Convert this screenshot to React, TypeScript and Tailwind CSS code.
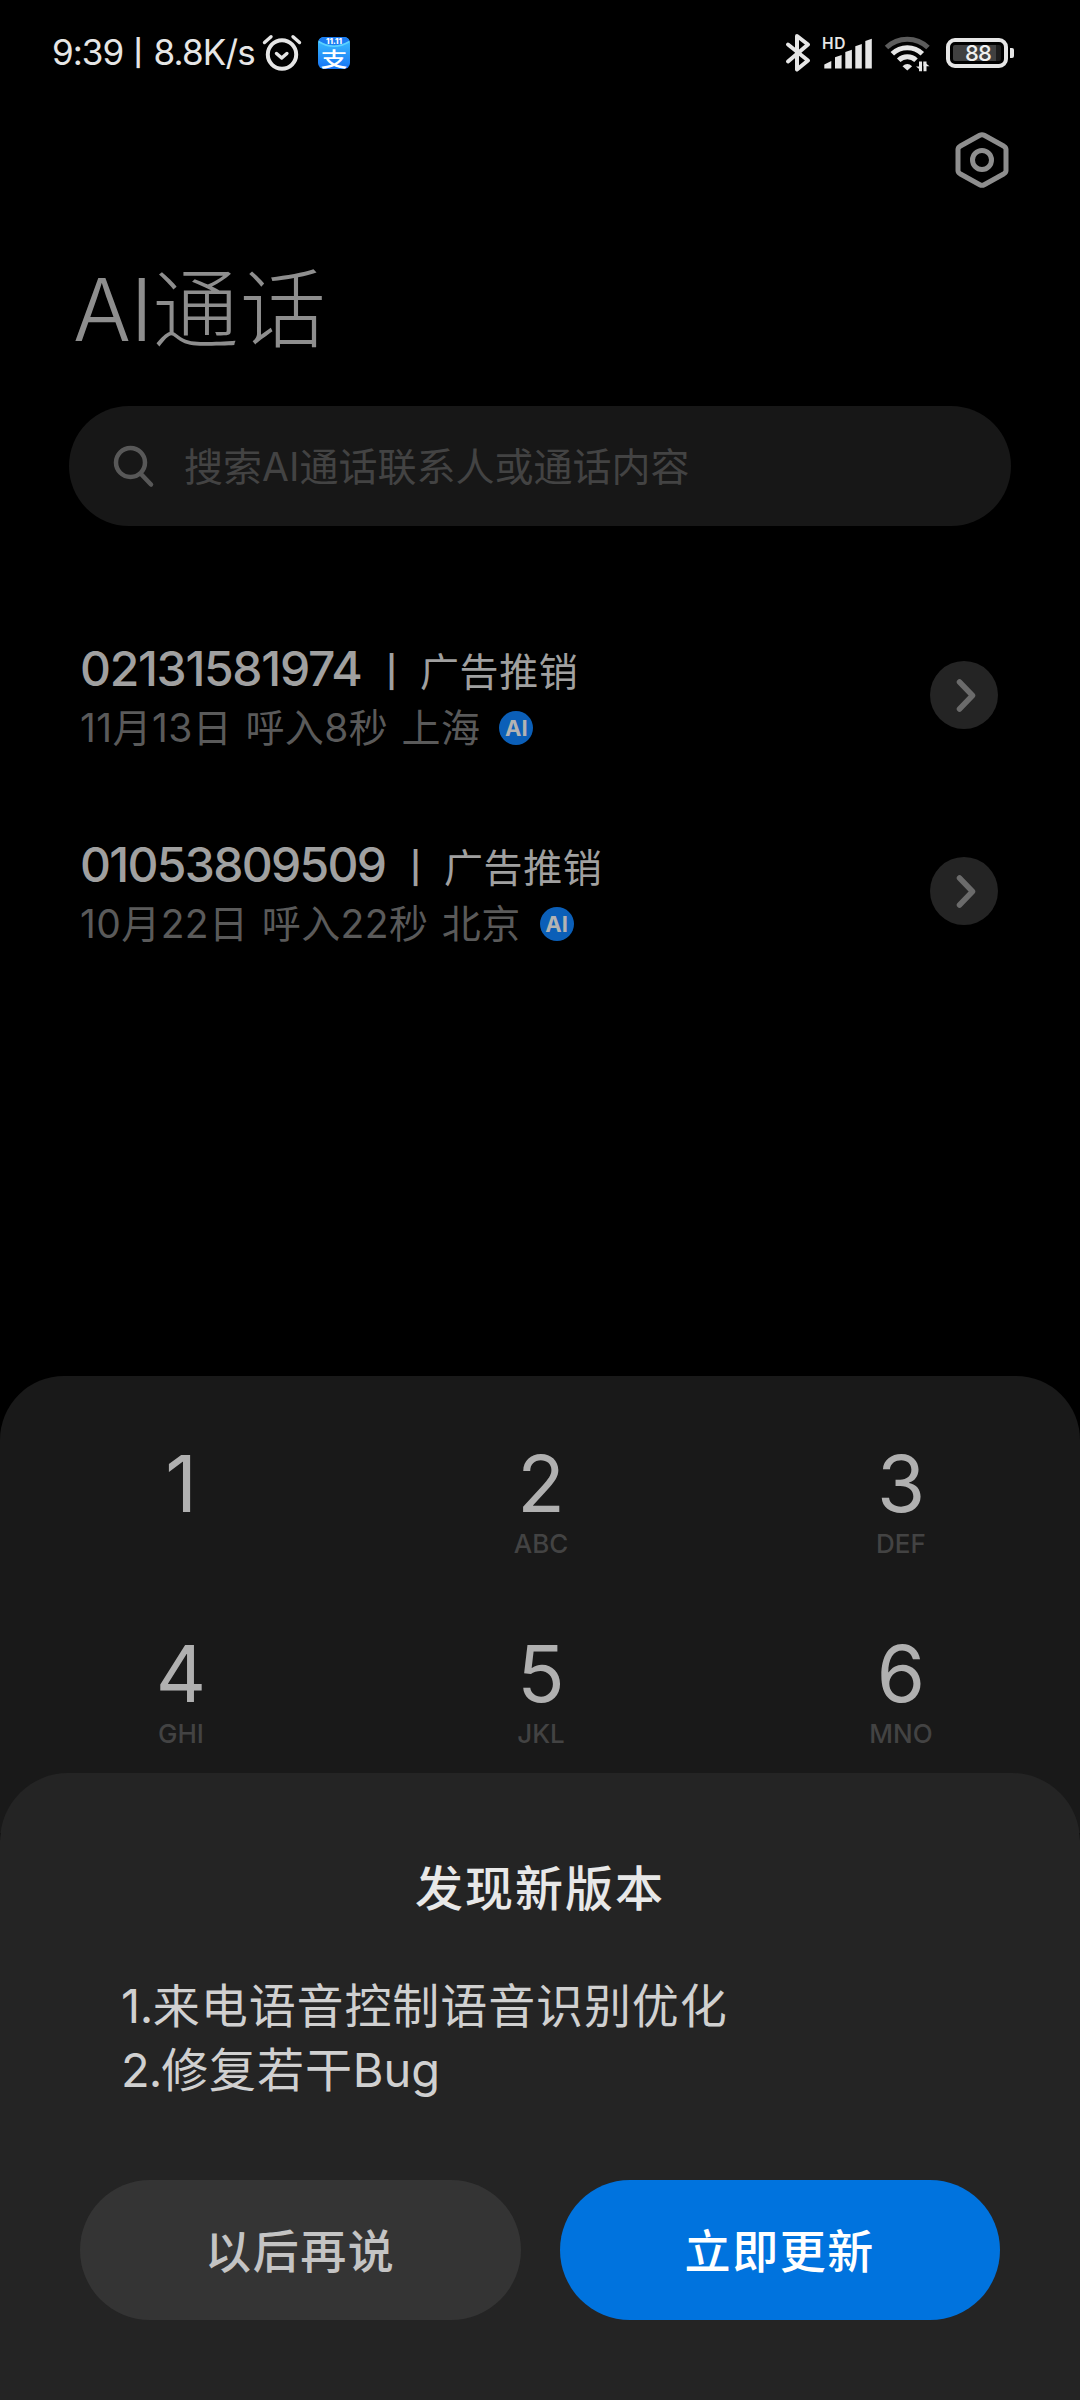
import type { ReactNode } from 'react';

type Call = {
  number: string;
  numberClass: string;
  tag: string;
  detail: string;
};

const CALLS: Call[] = [
  {
    number: '02131581974',
    numberClass: 'w-[306px] tracking-[-1.3px]',
    tag: '广告推销',
    detail: '11月13日 呼入8秒 上海',
  },
  {
    number: '01053809509',
    numberClass: 'w-[330px] tracking-[-1.7px]',
    tag: '广告推销',
    detail: '10月22日 呼入22秒 北京',
  },
];

const KEYS = [
  { digit: '1', letters: '' },
  { digit: '2', letters: 'ABC' },
  { digit: '3', letters: 'DEF' },
  { digit: '4', letters: 'GHI' },
  { digit: '5', letters: 'JKL' },
  { digit: '6', letters: 'MNO' },
];

function AlarmIcon() {
  return (
    <svg className="ml-[7px] h-10 w-10" viewBox="0 0 40 40" fill="none" stroke="#e6e6e6" strokeLinecap="round" strokeLinejoin="round">
      <circle cx="20" cy="21.5" r="14.2" strokeWidth="4" />
      <path d="M14.5 20.5l5.2 4.6 5.2-4.6" strokeWidth="3.4" />
      <path d="M2.5 9.5l6.5-5.8M37.5 9.5l-6.5-5.8" strokeWidth="3.4" />
    </svg>
  );
}

function AlipayIcon() {
  return (
    <svg className="ml-4 h-8 w-8 overflow-visible" viewBox="0 0 32 32">
      <defs>
        <linearGradient id="alipay" x1="0" y1="0" x2="0" y2="1">
          <stop offset="0" stopColor="#3fc4ff" />
          <stop offset="1" stopColor="#1673f5" />
        </linearGradient>
      </defs>
      <rect width="32" height="32" rx="6" fill="url(#alipay)" />
      <path d="M6 0h20q4 0 5.500 4Q16 13 .5 4 2 0 6 0z" fill="#1b7cf2" />
      <path d="M.5 4.500Q16 14 31.500 4.500" fill="none" stroke="#5ed2ff" strokeWidth="1.500" />
      <text x="16" y="6.500" textAnchor="middle" fontSize="8" fontWeight="800" fill="#fff" fontFamily="Inter, sans-serif">
        11.11
      </text>
      <text x="16" y="29.500" textAnchor="middle" fontSize="20" fontWeight="500" fill="#fff" fontFamily="'Noto Sans CJK SC', sans-serif" textLength="27" lengthAdjust="spacingAndGlyphs">
        支
      </text>
    </svg>
  );
}

function BluetoothIcon() {
  return (
    <svg className="h-10 w-7" viewBox="0 0 28 40" fill="none" stroke="#e6e6e6" strokeWidth="4" strokeLinecap="round" strokeLinejoin="round">
      <path d="M4 11.500L24 27.500 13 36.500V3l11 8.500L4 28.500" />
    </svg>
  );
}

function SignalIcon() {
  return (
    <svg className="ml-[10px] h-10 w-[52px]" viewBox="0 0 52 40" fill="#e6e6e6">
      <text x="0" y="15.5" fontSize="15.5" fontWeight="600" fontFamily="Inter, sans-serif" textLength="23.5">
        HD
      </text>
      <path d="M2.300 35.500v-4l7-3.500v7.500z" />
      <path d="M13 35.500V24.300l6.600-2.300v13.500z" />
      <path d="M23.300 35.500V19l6.600-2.300v18.800z" />
      <path d="M33.300 35.500V13.300L39.800 11v24.500z" />
      <path d="M43.300 35.500V8l6.500-2.300v29.800z" />
    </svg>
  );
}

function WifiIcon() {
  return (
    <svg className="ml-[10px] h-10 w-12" viewBox="0 0 48 40" fill="none">
      <path d="M2.500 14.500a30 30 0 0 1 41.500 0" stroke="#5c5c5c" strokeWidth="5" />
      <path d="M8.300 20.800a21.500 21.500 0 0 1 30 0" stroke="#e6e6e6" strokeWidth="5" />
      <path d="M14.700 27.300a12.500 12.500 0 0 1 17.300 0" stroke="#e6e6e6" strokeWidth="5" />
      <path d="M18.500 33.200q4.800-4.200 9.600 0l-4.800 4.300z" fill="#e6e6e6" />
      <path d="M36.500 28.500v9.700M41 38.200v-9.700" stroke="#e6e6e6" strokeWidth="3" />
      <path d="M32 33.500h6v4.700zM39.500 28.500v4.700h6z" fill="#e6e6e6" />
    </svg>
  );
}

function Battery() {
  return (
    <div className="ml-[14px] flex items-center gap-[2px]">
      <div className="flex h-[30px] w-[62px] items-center justify-center rounded-[9px] border-4 border-[#e6e6e6] p-[3px]">
        <div className="flex h-4 w-full items-center rounded-[2px] bg-gradient-to-r from-[#404040] from-90% to-[#1c1c1c] to-90% pl-[12px] text-[22px] leading-4 font-medium tracking-[-0.8px] text-[#f0f0f0]">
          88
        </div>
      </div>
      <div className="h-[10px] w-1 rounded-r-[2px] bg-[#e6e6e6]" />
    </div>
  );
}

function StatusBar() {
  return (
    <header className="flex h-[105px] items-center pr-[66px] pl-[52px]">
      <div className="flex w-[203px] items-center text-[35px] leading-none text-[#e6e6e6]">
        <span className="w-[82px] tracking-[-1px]">9:39</span>
        <span className="w-5 text-[26px] font-semibold">|</span>
        <span className="tracking-[-0.8px]">8.8K/s</span>
      </div>
      <AlarmIcon />
      <AlipayIcon />
      <div className="ml-auto flex items-center">
        <BluetoothIcon />
        <SignalIcon />
        <WifiIcon />
        <Battery />
      </div>
    </header>
  );
}

function SettingsIcon() {
  return (
    <svg className="h-[60px] w-[60px]" viewBox="0 0 60 60" fill="none" stroke="#8e8e8e" strokeWidth="5" strokeLinejoin="round">
      <path d="M27.800 5.300L8 16.300Q6 17.500 6 19.500V40.500Q6 42.500 8 43.700L27.800 54.700Q30 55.900 32.200 54.700L52 43.700Q54 42.500 54 40.500V19.500Q54 17.500 52 16.300L32.200 5.300Q30 4.100 27.800 5.300z" />
      <circle cx="30" cy="30" r="9.5" />
    </svg>
  );
}

function SearchBar() {
  return (
    <div className="mx-[69px] mt-[34px] flex h-[120px] items-center rounded-full bg-[#171717] pl-11">
      <svg className="h-11 w-11" viewBox="0 0 44 44" fill="none" stroke="#585858" strokeWidth="4.5" strokeLinecap="round">
        <circle cx="17.5" cy="18.5" r="14.5" />
        <path d="M28 30L38 40.500" />
      </svg>
      <span className="ml-[27px] text-[39px] leading-none whitespace-nowrap text-[#434343]">搜索AI通话联系人或通话内容</span>
    </div>
  );
}

function CallRow({ call }: { call: Call }) {
  return (
    <li className="flex h-[196px] items-center justify-between">
      <div className="pt-[5px]">
        <div className="flex h-[60px] items-baseline text-[39px] leading-[60px] text-[#a0a0a0]">
          <span className={`text-[48px] font-medium ${call.numberClass}`}>{call.number}</span>
          <span className="w-[34px] self-center pt-[6px] text-[31px] leading-[54px] font-semibold">|</span>
          <span className="tracking-[0.6px]">{call.tag}</span>
        </div>
        <div className="flex h-[57px] items-center text-[39px] leading-[57px] whitespace-nowrap text-[#5a5a5a]">
          <span className="tracking-[0.4px] [word-spacing:2px]">{call.detail}</span>
          <span className="ml-[19px] flex h-[34px] w-[34px] items-center justify-center rounded-full bg-[#0b5fb8] text-[22px] leading-none font-bold text-[#b3b3b3]">
            AI
          </span>
        </div>
      </div>
      <span className="flex h-[68px] w-[68px] items-center justify-center rounded-full bg-[#242424]">
        <svg className="ml-[3px] h-[34px] w-5" viewBox="0 0 20 34" fill="none" stroke="#6b6b6b" strokeWidth="5.5" strokeLinecap="round" strokeLinejoin="round">
          <path d="M3.500 4L16.500 17.500 3.500 31" />
        </svg>
      </span>
    </li>
  );
}

function Keypad() {
  return (
    <section className="grid h-[457px] grid-cols-3 content-start rounded-t-[64px] bg-[#191919] pt-[50px]">
      {KEYS.map((key) => (
        <button key={key.digit} type="button" className="flex h-[190px] flex-col items-center pl-[2px]">
          <span className="h-[108px] text-[78px] leading-[116px] text-[#b0b0b0]">{key.digit}</span>
          <span className="text-[26px] leading-[20px] font-medium text-[#434343]">{key.letters}</span>
        </button>
      ))}
    </section>
  );
}

function DialogButton({ className, children }: { className: string; children: ReactNode }) {
  return (
    <button
      type="button"
      className={`h-[140px] flex-1 rounded-full pt-[2px] text-[46px] leading-none font-medium tracking-[1.6px] ${className}`}
    >
      {children}
    </button>
  );
}

function UpdateDialog() {
  return (
    <section className="relative -mt-[60px] flex h-[627px] flex-col rounded-t-[68px] bg-[#242424] px-20 pt-[84px]">
      <h2 className="text-center text-[48px] leading-[64px] font-medium tracking-[2px] text-[#e8e8e8]">发现新版本</h2>
      <div className="mt-[53px] pl-[41px] text-[47px] leading-[64px] tracking-[0.9px] text-[#d0d0d0]">
        <p>
          <span className="tracking-[-0.4px]">1.</span>来电语音控制语音识别优化
        </p>
        <p>
          <span className="tracking-[-1px]">2.</span>修复若干<span className="tracking-[-0.1px]">Bug</span>
        </p>
      </div>
      <div className="mt-auto mb-20 flex gap-[39px]">
        <DialogButton className="bg-[#343434] text-[#c4c4c4]">以后再说</DialogButton>
        <DialogButton className="bg-[#0073de] text-white">立即更新</DialogButton>
      </div>
    </section>
  );
}

export default function App() {
  return (
    <main className="flex h-[2400px] w-[1080px] flex-col overflow-hidden bg-black font-['Inter','Noto_Sans_CJK_SC',sans-serif]">
      <StatusBar />
      <div className="flex h-[110px] justify-end pt-[25px] pr-[68px]">
        <SettingsIcon />
      </div>
      <h1 className="mt-[36px] ml-[73px] h-[121px] text-[86px] leading-[119px] font-light tracking-[1.2px] text-[#8e8e8e]">
        <span className="tracking-[-0.5px]">AI</span>通话
      </h1>
      <SearchBar />
      <ul className="mt-[71px] flex-1 pr-[82px] pl-20">
        {CALLS.map((call) => (
          <CallRow key={call.number} call={call} />
        ))}
      </ul>
      <Keypad />
      <UpdateDialog />
    </main>
  );
}
